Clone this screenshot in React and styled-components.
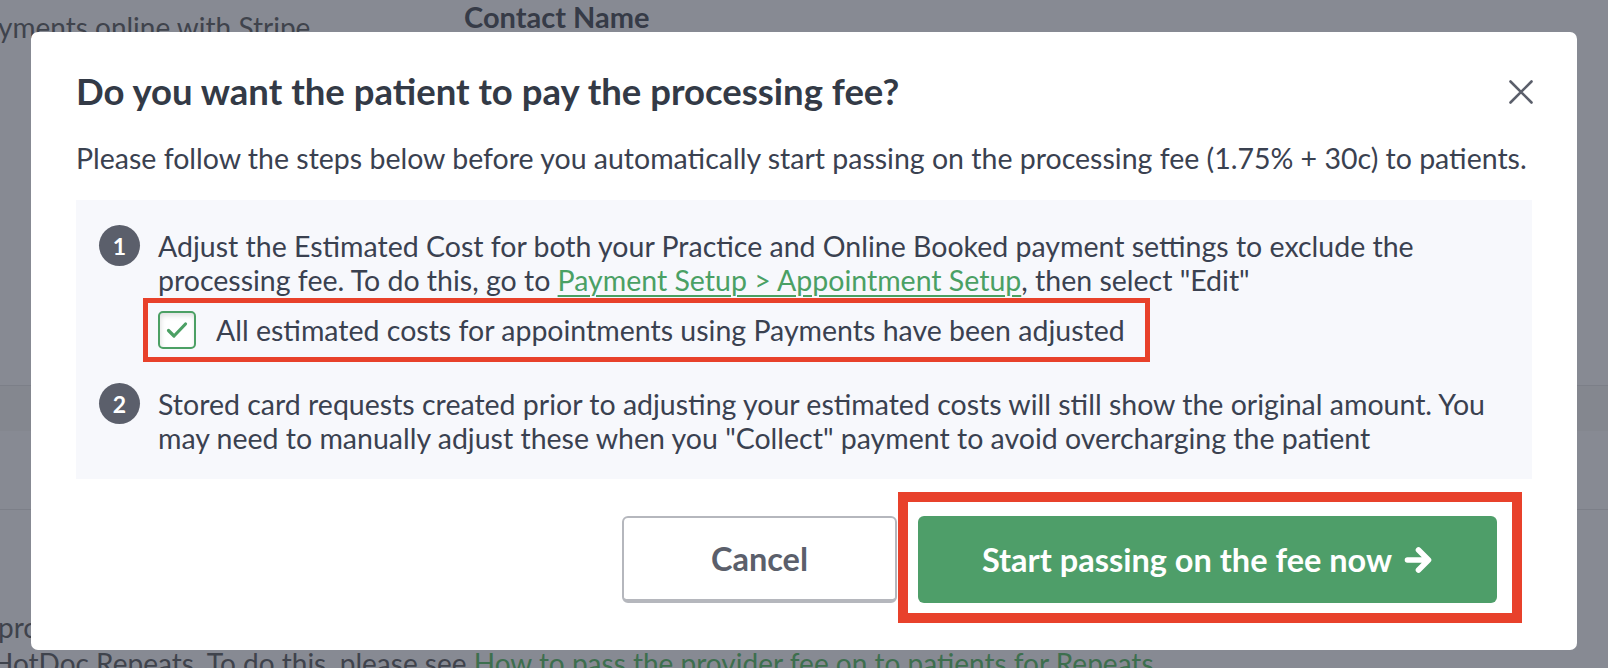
import styled, { createGlobalStyle } from "styled-components";

const FONT = `Lato, "Noto Sans", "Liberation Sans", sans-serif`;

const GlobalStyle = createGlobalStyle`
  * { box-sizing: border-box; }
  html, body {
    margin: 0;
    background: #878a93;
    font-family: ${FONT};
    overflow: hidden;
  }
`;

const StyledPage = styled.div`
  width: 1608px;
  height: 668px;
  overflow: hidden;
  color: #3f434c;
`;

const StyledTopBar = styled.div`
  display: grid;
  grid-template-columns: 464px 1fr;
  height: 385px;
`;

const StyledIntro = styled.p`
  margin: 10px 0 0 -2px;
  font-size: 28px;
  line-height: 34px;
  white-space: nowrap;
`;

const StyledColumnTitle = styled.h3`
  margin: 0;
  font-size: 29px;
  line-height: 34px;
  font-weight: 700;
  color: #363b47;
`;

const StyledTableHead = styled.div`
  height: 46px;
  border-top: 1px solid #7c7f88;
  background: #84878f;
`;

const StyledTableRow = styled.div`
  height: 79px;
  border-bottom: 1px solid #7c7f88;
`;

const StyledNote = styled.p`
  margin: 99px 0 0 -8px;
  text-indent: 6px;
  font-size: 28px;
  line-height: 36px;
  white-space: nowrap;

  a {
    color: #3d6f4e;
    text-decoration: none;
  }
`;

const StyledLayer = styled.div`
  position: fixed;
  inset: 0;
  display: flex;
  justify-content: center;
  align-items: flex-start;
  padding-top: 32px;
`;

const StyledModal = styled.div`
  width: 1546px;
  display: flex;
  flex-direction: column;
  padding: 38px 45px 27px;
  background: #fff;
  border-radius: 7px;
  color: #3a4150;
`;

const StyledHeader = styled.div`
  display: flex;
  align-items: center;
  justify-content: space-between;
`;

const StyledTitle = styled.h2`
  margin: 0;
  font-size: 36.5px;
  line-height: 43px;
  font-weight: 700;
  color: #333a46;
`;

const StyledClose = styled.button`
  display: grid;
  place-items: center;
  width: 30px;
  height: 30px;
  margin-right: -4px;
  padding: 0;
  border: 0;
  background: none;
  cursor: pointer;
`;

const StyledLead = styled.p`
  margin: 28px 0 0;
  font-size: 28.5px;
  line-height: 34px;
  white-space: nowrap;
`;

const StyledSteps = styled.ol`
  display: flex;
  flex-direction: column;
  gap: 25px;
  margin: 25px 0 0;
  padding: 29px 10px 24px 23px;
  list-style: none;
  background: #f7f8fc;
`;

const StyledStep = styled.li`
  display: flex;
  align-items: flex-start;
  gap: 18px;
`;

const StyledStepNumber = styled.span`
  display: grid;
  place-items: center;
  flex-shrink: 0;
  width: 41px;
  height: 41px;
  margin-top: -4px;
  border-radius: 50%;
  background: #5b5f6b;
  color: #fff;
  font-size: 23px;
  font-weight: 700;
`;

const StyledStepBody = styled.div`
  flex: 1;
  font-size: 28.5px;
  line-height: 34px;

  a {
    color: #4aa064;
    text-decoration: underline;
    text-underline-offset: 4px;
    text-decoration-thickness: 1.5px;
  }
`;

const StyledConfirm = styled.label`
  display: flex;
  align-items: center;
  gap: 20px;
  width: fit-content;
  margin: 1px 0 0 -15px;
  padding: 8px 20px 8px 10px;
  border: 5px solid #e8412b;
  cursor: pointer;
`;

const StyledCheckbox = styled.span`
  display: grid;
  place-items: center;
  width: 38px;
  height: 38px;
  border: 2.5px solid #4ca064;
  border-radius: 5px;
  background: #fff;
  box-shadow: inset 1px 3px 5px rgba(0, 0, 0, 0.12);
`;

const StyledFooter = styled.div`
  display: flex;
  justify-content: flex-end;
  align-items: flex-start;
  gap: 1px;
  margin-top: 13px;
  padding-right: 10px;
`;

const StyledCancel = styled.button`
  width: 275px;
  height: 87px;
  margin-top: 24px;
  border: 2px solid #b5b7bd;
  border-bottom-width: 4px;
  border-radius: 6px;
  background: #fff;
  color: #5b5f6b;
  font-family: ${FONT};
  font-size: 32.5px;
  font-weight: 700;
  cursor: pointer;
`;

const StyledHighlight = styled.div`
  padding: 14px 15px 10px 10px;
  border: 10px solid #e8412b;
`;

const StyledPrimary = styled.button`
  display: flex;
  align-items: center;
  justify-content: center;
  gap: 12px;
  width: 579px;
  height: 87px;
  border: 0;
  border-radius: 6px;
  background: #4e9e69;
  color: #fff;
  font-family: ${FONT};
  font-size: 32.5px;
  font-weight: 700;
  cursor: pointer;
`;

function CloseIcon() {
  return (
    <svg width="24" height="24" viewBox="0 0 24 24">
      <path
        d="M1.5 1.5 22.5 22.5M22.5 1.5 1.5 22.5"
        stroke="#5b5f6b"
        strokeWidth="2.6"
        strokeLinecap="round"
        fill="none"
      />
    </svg>
  );
}

function CheckIcon() {
  return (
    <svg width="24" height="20" viewBox="0 0 24 20">
      <polyline
        points="3.5,10.5 9,16 20.5,4"
        stroke="#4ca064"
        strokeWidth="3.2"
        strokeLinecap="round"
        strokeLinejoin="round"
        fill="none"
      />
    </svg>
  );
}

function ArrowIcon() {
  return (
    <svg width="29" height="30" viewBox="0 0 29 30">
      <path
        d="M3.5 15H23.5M14.5 5 24.5 15 14.5 25"
        stroke="#fff"
        strokeWidth="5.6"
        strokeLinecap="round"
        strokeLinejoin="round"
        fill="none"
      />
    </svg>
  );
}

const steps = [
  {
    id: 1,
    text: (
      <>
        Adjust the Estimated Cost for both your Practice and Online Booked
        payment settings to exclude the processing fee. To do this, go to{" "}
        <a href="#setup">Payment Setup &gt; Appointment Setup</a>, then select
        "Edit"
      </>
    ),
    confirm: "All estimated costs for appointments using Payments have been adjusted",
  },
  {
    id: 2,
    text: (
      <>
        Stored card requests created prior to adjusting your estimated costs
        will still show the original amount. You may need to manually adjust
        these when you "Collect" payment to avoid overcharging the patient
      </>
    ),
  },
];

function App() {
  return (
    <>
      <GlobalStyle />
      <StyledPage>
        <StyledTopBar>
          <StyledIntro>yments online with Stripe</StyledIntro>
          <StyledColumnTitle>Contact Name</StyledColumnTitle>
        </StyledTopBar>
        <StyledTableHead />
        <StyledTableRow />
        <StyledNote>
          processing fee is passed on to patients
          <br />
          HotDoc Repeats. To do this, please see{" "}
          <a href="#repeats">How to pass the provider fee on to patients for Repeats</a>
        </StyledNote>
      </StyledPage>

      <StyledLayer>
        <StyledModal role="dialog">
          <StyledHeader>
            <StyledTitle>Do you want the patient to pay the processing fee?</StyledTitle>
            <StyledClose aria-label="Close">
              <CloseIcon />
            </StyledClose>
          </StyledHeader>
          <StyledLead>
            Please follow the steps below before you automatically start passing
            on the processing fee (1.75% + 30c) to patients.
          </StyledLead>

          <StyledSteps>
            {steps.map((step) => (
              <StyledStep key={step.id}>
                <StyledStepNumber>{step.id}</StyledStepNumber>
                <StyledStepBody>
                  {step.text}
                  {step.confirm && (
                    <StyledConfirm>
                      <StyledCheckbox>
                        <CheckIcon />
                      </StyledCheckbox>
                      {step.confirm}
                    </StyledConfirm>
                  )}
                </StyledStepBody>
              </StyledStep>
            ))}
          </StyledSteps>

          <StyledFooter>
            <StyledCancel>Cancel</StyledCancel>
            <StyledHighlight>
              <StyledPrimary>
                Start passing on the fee now
                <ArrowIcon />
              </StyledPrimary>
            </StyledHighlight>
          </StyledFooter>
        </StyledModal>
      </StyledLayer>
    </>
  );
}

export default App;
